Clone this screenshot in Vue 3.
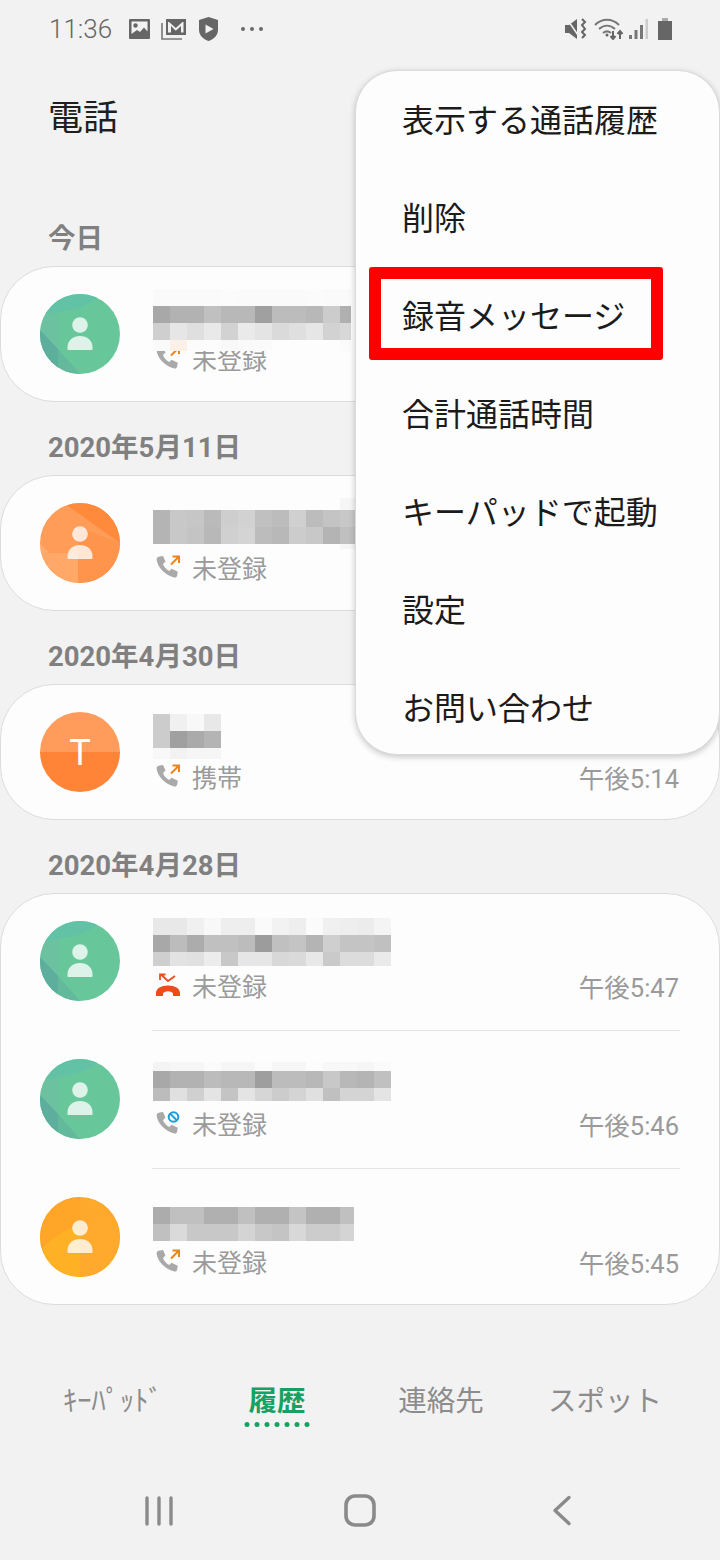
<template>
  <div class="screen">
    <div class="status">
      <span class="clock">11:36</span>
      <svg class="st-img" width="21" height="20" viewBox="0 0 21 20">
        <path fill="#666" d="M1 0h19a1 1 0 0 1 1 1v18a1 1 0 0 1-1 1H1a1 1 0 0 1-1-1V1a1 1 0 0 1 1-1z" />
        <path fill="#f2f2f2" d="M2.500 2.500h16v10l-3.500-4-4 4.500-3-2-5.500 4z" />
        <circle cx="6.500" cy="6.500" r="2.200" fill="#666" />
      </svg>
      <svg class="st-mail" width="26" height="22" viewBox="0 0 26 22">
        <path fill="none" stroke="#777" stroke-width="1.600" d="M1 5v16h20" />
        <path fill="#666" d="M5 1h20v16H5z" />
        <path fill="#f2f2f2" d="M8 4l6.800 6L21.500 4h1v10.500h-2.500V8l-5.200 4.800L10 8v6.500H7V4z" />
      </svg>
      <svg class="st-shield" width="19" height="24" viewBox="0 0 19 24">
        <path fill="#666" d="M9.500 0L19 3v10c0 5-4 9-9.500 11C4 22 0 18 0 13V3z" />
        <path fill="#f2f2f2" d="M6.500 7.500l8 4.500-8 4.500z" />
      </svg>
      <div class="st-dots"><i></i><i></i><i></i></div>

      <div class="st-right">
        <svg width="22" height="22" viewBox="0 0 22 22">
          <path fill="#666" d="M0 7h4l8-6v20l-8-6H0z" />
          <path fill="none" stroke="#666" stroke-width="2" d="M17 1l3 3-3 3 3 4-3 3 3 3-3 3" />
          <path stroke="#f2f2f2" stroke-width="1.500" d="M2 1l13 19" />
        </svg>
        <svg class="st-wifi" width="30" height="22" viewBox="0 0 30 22">
          <path fill="none" stroke="#777" stroke-width="2" d="M1 7c7-7 17-7 24 0M5 11c5-4.500 11-4.500 16 0M9 15c2.500-2 5.500-2 8 0" />
          <circle cx="13" cy="17" r="1.500" fill="#666" />
          <path fill="none" stroke="#666" stroke-width="2" d="M19 13v7M16.500 18l2.500 3 2.500-3M26 21v-7M23.500 16l2.500-3 2.500 3" />
        </svg>
        <svg class="st-signal" width="19" height="22" viewBox="0 0 19 22">
          <rect x="0" y="17" width="3" height="4" fill="#777" />
          <rect x="5.500" y="12" width="3" height="9" fill="#777" />
          <rect x="11" y="7" width="3" height="14" fill="#777" />
          <rect x="16.500" y="1" width="2.500" height="20" fill="#ccc" />
        </svg>
        <svg class="st-batt" width="14" height="22" viewBox="0 0 14 22">
          <rect x="4" y="0" width="6" height="3" fill="#aaa" />
          <rect x="0" y="3" width="14" height="19" fill="#666" />
        </svg>
      </div>
    </div>

    <div class="header">電話</div>

    <template v-for="section in sections" :key="section.label">
      <div class="day">{{ section.label }}</div>
      <div class="card" :class="{ multi: section.rows.length > 1 }">
        <div v-for="(row, i) in section.rows" :key="i" class="row">
          <svg class="avatar" width="80" height="80" viewBox="0 0 80 80">
            <template v-if="row.avatar === 'green'">
              <rect width="80" height="80" fill="#67c79b" />
              <path fill="#62c2a6" d="M0 0h62C52 10 36 16 18 18L0 22z" />
              <path fill="#6cc2a0" d="M0 22l18-4v62H0z" />
              <path fill="#5dae9c" d="M0 36l18 19v25H0z" />
              <path fill="#63b99b" d="M18 55l22 25H18z" />
            </template>
            <template v-else-if="row.avatar === 'orange'">
              <rect width="80" height="80" fill="#ff9c58" />
              <path fill="#ffaa6e" d="M0 40L38 80H0z" />
              <path fill="#ffa868" d="M0 50h38v30H0z" />
              <path fill="#ff944c" d="M38 24l42 16v40H38z" />
              <path fill="#ff8a3c" d="M24 0h56v40z" />
            </template>
            <template v-else-if="row.avatar === 't'">
              <rect width="80" height="40" fill="#ff9c5c" />
              <rect y="40" width="80" height="40" fill="#ff8438" />
            </template>
            <template v-else>
              <rect width="80" height="80" fill="#ffa92c" />
              <path fill="#ffa528" d="M0 0h40v28L0 52z" />
              <path fill="#ffb126" d="M0 54c12-14 26-22 40-26v52H0z" />
              <path fill="#ffaa2c" d="M40 28c14-3 28-3 40-2v54H40z" />
            </template>
            <text v-if="row.avatar === 't'" class="avatar-t" x="40" y="53" text-anchor="middle">T</text>
            <g v-else fill="#fff" fill-opacity=".78">
              <circle cx="40" cy="31" r="7.800" />
              <path d="M27.500 55v-2c0-6.500 5.500-11 12.500-11s12.500 4.500 12.500 11v2c0 .6-.4 1-1 1h-23c-.6 0-1-.4-1-1z" />
            </g>
          </svg>

          <div class="body" :class="{ ruled: i < section.rows.length - 1 }">
            <div class="name-slot">
              <div class="mosaic" :style="{ marginTop: row.top + 'px', width: row.width + 'px' }">
                <div v-for="(band, b) in row.bands" :key="b" class="band" :style="{ height: band.h + 'px' }">
                  <span
                    v-for="(c, n) in band.c.split(' ')"
                    :key="n"
                    class="cell"
                    :style="{ background: c.length === 2 ? '#' + c + c + c : '#' + c }"
                  ></span>
                </div>
              </div>
            </div>
            <div class="meta">
              <svg class="call" width="24" height="24" viewBox="0 0 24 24">
                <template v-if="row.call === 'rejected'">
                  <path fill="none" stroke="#ee4a1c" stroke-width="1.800" d="M5 1.500l7 6.500 7-5M4 7V1.500h5.500" />
                  <path fill="#ee4a1c" d="M0 23v-3c0-4.500 5-7.500 12-7.500s12 3 12 7.500v3h-7v-2.800c-1-1.200-3-2-5-2s-4 .8-5 2V23z" />
                </template>
                <template v-else>
                  <path fill="#a9a9a9" d="M3.500 1.500L7 1l2.500 5.500L7 9c1 3 3.200 5.500 6.300 7l2.300-2.200 6.200 3-.7 4c-.4 1.400-1.300 2-2.600 1.700C9.500 20.500 1.500 12.500.6 4.500.5 3 1.500 1.900 3.500 1.500z" />
                  <template v-if="row.call === 'out'">
                    <path fill="none" stroke="#e8851c" stroke-width="2" d="M15 9.500L22.500 2M16.500 1.500h6.500V8" />
                  </template>
                  <template v-else>
                    <circle cx="17.500" cy="6" r="4.800" fill="#fdfdfd" stroke="#1a9ed8" stroke-width="2" />
                    <path stroke="#1a9ed8" stroke-width="2" d="M14.500 3l6 6" />
                  </template>
                </template>
              </svg>
              <span class="kind">{{ row.kind }}</span>
              <span class="time">{{ row.time }}</span>
            </div>
          </div>
        </div>
      </div>
    </template>

    <div class="tabs">
      <div v-for="tab in tabs" :key="tab.label" class="tab" :class="{ active: tab.active }">
        {{ tab.label }}
        <div v-if="tab.active" class="tab-dots"><i v-for="n in 7" :key="n"></i></div>
      </div>
    </div>

    <div class="nav">
      <svg width="30" height="30" viewBox="0 0 30 30">
        <path stroke="#8a8a8a" stroke-width="3.400" stroke-linecap="round" d="M3 2v26M15 2v26M27 2v26" />
      </svg>
      <svg class="nav-home" width="32" height="33" viewBox="0 0 32 33">
        <rect x="2" y="2" width="28" height="29" rx="9" fill="none" stroke="#8a8a8a" stroke-width="3.600" />
      </svg>
      <svg class="nav-back" width="20" height="31" viewBox="0 0 20 31">
        <path fill="none" stroke="#8a8a8a" stroke-width="3.400" stroke-linecap="round" stroke-linejoin="round" d="M17 2.500L3 15.500l14 13" />
      </svg>
    </div>

    <div class="menu">
      <div v-for="item in menu" :key="item" class="menu-item">{{ item }}</div>
      <div class="highlight"></div>
    </div>
  </div>
</template>

<script setup>
const sections = [
  {
    label: '今日',
    rows: [
      {
        avatar: 'green', call: 'out', kind: '未登録', time: '', top: 22, width: 198,
        bands: [
          { h: 17, c: 'fa fa fa fa fb fa fa fa fa fb fa fa' },
          { h: 17, c: 'a8 b2 b2 c0 b8 b8 a0 bc bc b8 cc b0' },
          { h: 17, c: 'cf e6 df e9 d2 ea e4 da df e6 d2 d8' },
          { h: 11, c: 'fa fdf0e6 fb fc f8 fa fa fd fd fd fd fb' },
        ],
      },
    ],
  },
  {
    label: '2020年5月11日',
    rows: [
      {
        avatar: 'orange', call: 'out', kind: '未登録', time: '', top: 22, width: 204,
        bands: [
          { h: 12, c: 'fd fd fd fd fd fd fd fd fd fd fd f6' },
          { h: 17, c: 'b4 c8 c6 ba ce d2 c0 bc d0 bc c4 c8' },
          { h: 17, c: 'b4 c8 c4 b8 d0 d4 bc b8 cc c8 b4 c0' },
          { h: 5, c: 'fd fd fd fd fd fd fd fd fd fd fd f6' },
        ],
      },
    ],
  },
  {
    label: '2020年4月30日',
    rows: [
      {
        avatar: 't', call: 'out', kind: '携帯', time: '午後5:14', top: 29, width: 68,
        bands: [
          { h: 17, c: 'cc f0 f8 e8' },
          { h: 17, c: 'cc a0 aa b4' },
          { h: 11, c: 'f8 f2 f6 f6' },
        ],
      },
    ],
  },
  {
    label: '2020年4月28日',
    rows: [
      {
        avatar: 'green', call: 'rejected', kind: '未登録', time: '午後5:47', top: 24, width: 238,
        bands: [
          { h: 17, c: 'e8 e8 f0 f8 ee ee fa f2 ee fb f0 ee ec f4' },
          { h: 17, c: 'a8 bc ac c0 c0 bc 9c c0 c4 b4 cf c4 c4 c0' },
          { h: 14, c: 'cf e2 e0 ec c8 e6 e6 d8 da e8 ca dc dc ea' },
        ],
      },
      {
        avatar: 'green', call: 'blocked', kind: '未登録', time: '午後5:46', top: 30, width: 238,
        bands: [
          { h: 9, c: 'f4 f6 f6 fb f6 f6 fc f6 f6 fc f8 f8 f6 fa' },
          { h: 17, c: 'a8 b2 b2 bc b8 b8 9e bc bc b8 c8 b8 b4 c0' },
          { h: 13, c: 'bc e0 d0 e4 c4 e4 d6 cc d4 e0 c0 d4 d4 e4' },
        ],
      },
      {
        avatar: 'yellow', call: 'out', kind: '未登録', time: '午後5:45', top: 37, width: 201,
        bands: [
          { h: 17, c: 'ac c0 c0 b0 b0 c0 b0 b0 c4 b0 b0 c0' },
          { h: 17, c: 'c0 da c8 c8 c8 d4 c8 c4 d8 cc cc d4' },
        ],
      },
    ],
  },
]

const tabs = [
  { label: 'ｷｰﾊﾟｯﾄﾞ' },
  { label: '履歴', active: true },
  { label: '連絡先' },
  { label: 'スポット' },
]

const menu = ['表示する通話履歴', '削除', '録音メッセージ', '合計通話時間', 'キーパッドで起動', '設定', 'お問い合わせ']
</script>

<style>
html,
body {
  margin: 0;
  background: #f2f2f2;
}
</style>

<style scoped>
.screen {
  position: relative;
  width: 720px;
  height: 1560px;
  overflow: hidden;
  background: #f2f2f2;
  font-family: Roboto, "Noto Sans CJK JP", sans-serif;
}
.status {
  display: flex;
  align-items: center;
  height: 58px;
  padding: 0 48px 0 49px;
  box-sizing: border-box;
}
.clock {
  width: 65px;
  font-size: 26px;
  font-weight: 300;
  color: #666;
}
.st-img {
  margin-left: 15px;
}
.st-mail {
  margin-left: 11px;
}
.st-shield {
  margin-left: 12px;
}
.st-dots {
  display: flex;
  gap: 5px;
  margin-left: 23px;
}
.st-dots i {
  width: 4px;
  height: 4px;
  border-radius: 50%;
  background: #6a6a6a;
}
.st-right {
  display: flex;
  align-items: center;
  margin-left: auto;
}
.st-wifi {
  margin-left: 7px;
}
.st-signal {
  margin-left: 5px;
}
.st-batt {
  margin-left: 10px;
}
.header {
  height: 135px;
  padding: 36px 0 0 48px;
  box-sizing: border-box;
  font-size: 35px;
  line-height: 50px;
  color: #1f1f1f;
}
.day {
  height: 73px;
  padding: 28px 0 9px 48px;
  box-sizing: border-box;
  font-size: 27.500px;
  line-height: 36px;
  font-weight: 700;
  color: #808080;
}
.card {
  display: flex;
  flex-direction: column;
  height: 136px;
  box-sizing: border-box;
  background: #fdfdfd;
  border: 1px solid #dcdcdc;
  border-radius: 54px;
}
.card.multi {
  height: 412px;
}
.row {
  flex: 1 1 0;
  min-height: 0;
  display: flex;
  padding-left: 39px;
}
.card.multi .row {
  flex: none;
  height: 138px;
  box-sizing: border-box;
  padding-top: 1px;
}
.card.multi .row:first-child {
  height: 137px;
  padding-top: 0;
}
.card.multi .row:last-child {
  height: 135px;
}
.avatar {
  flex: none;
  margin-top: 27px;
  border-radius: 50%;
}
.avatar-t {
  font-family: Roboto, sans-serif;
  font-size: 36px;
  fill: #fff;
}
.body {
  flex: 1;
  min-width: 0;
  margin: 0 39px 0 32px;
}
.body.ruled {
  border-bottom: 1px solid #e4e4e4;
}
.name-slot {
  display: flow-root;
  height: 74px;
}
.mosaic {
  position: relative;
  z-index: 1;
  overflow: hidden;
  margin-left: 1px;
}
.band {
  display: flex;
}
.cell {
  width: 17px;
  flex: none;
}
.meta {
  display: flex;
  align-items: center;
  height: 34px;
  padding: 0 1px 0 4px;
}
.call {
  flex: none;
}
.kind {
  margin-left: 12px;
  font-size: 25px;
  color: #9a9a9a;
}
.time {
  margin-left: auto;
  font-size: 25.500px;
  color: #9a9a9a;
}
.tabs {
  position: absolute;
  left: 31px;
  right: 33px;
  bottom: 136px;
  display: grid;
  grid-template-columns: repeat(4, 1fr);
}
.tab {
  position: relative;
  text-align: center;
  font-size: 28.500px;
  line-height: 44px;
  color: #8c8c8c;
}
.tab.active {
  font-weight: 700;
  color: #16a163;
}
.tab-dots {
  position: absolute;
  left: 50%;
  top: 42px;
  transform: translateX(-50%);
  display: flex;
  gap: 5px;
}
.tab-dots i {
  width: 5px;
  height: 5px;
  border-radius: 50%;
  background: #12a562;
}
.nav {
  position: absolute;
  left: 144px;
  bottom: 33px;
  display: flex;
  align-items: center;
}
.nav-home {
  margin-left: 170px;
}
.nav-back {
  margin-left: 176px;
}
.menu {
  position: absolute;
  z-index: 2;
  top: 70px;
  left: 355px;
  width: 365px;
  height: 685px;
  box-sizing: border-box;
  padding-top: 1px;
  background: #fdfdfd;
  border: 1px solid #dadada;
  border-radius: 42px;
  box-shadow: 0 2px 6px rgba(0, 0, 0, 0.22);
}
.menu-item {
  height: 98px;
  padding-left: 46px;
  font-size: 32px;
  line-height: 98px;
  color: #1b1b1b;
}
.highlight {
  position: absolute;
  left: 13px;
  top: 196px;
  width: 294px;
  height: 93px;
  box-sizing: border-box;
  border: 12px solid #ff0000;
  border-radius: 3px;
}
</style>
